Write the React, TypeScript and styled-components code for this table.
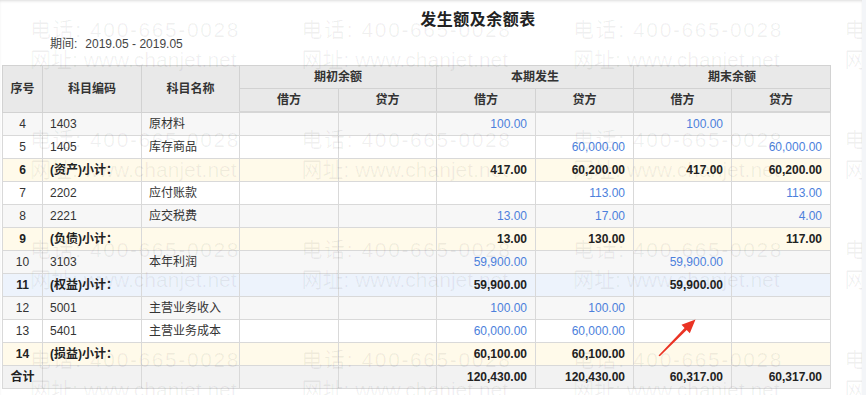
import React from "react";
import styled, { createGlobalStyle } from "styled-components";

const GlobalStyle = createGlobalStyle`
  html, body { margin: 0; padding: 0; }
  body {
    background: #f3f5f8;
    font-family: "Liberation Sans", "Noto Sans CJK SC", sans-serif;
    color: #333;
    overflow: hidden;
  }
`;

const Page = styled.div`
  display: flex;
  height: 395px;
`;

const Panel = styled.div`
  position: relative;
  width: 862px;
  height: 395px;
  background: #fff;
  box-shadow: inset 0 2px 3px -1px rgba(0, 0, 0, 0.14);
  overflow: hidden;
`;

const Title = styled.h1`
  margin: 0;
  padding: 10px 0 0 94px;
  height: 20px;
  line-height: 20px;
  text-align: center;
  font-size: 16px;
  font-weight: bold;
  color: #222;
  letter-spacing: 0.5px;
`;

const Period = styled.div`
  margin-top: 6px;
  padding-left: 50px;
  height: 16px;
  line-height: 16px;
  font-size: 12px;
  color: #444;
  display: flex;
  gap: 8px;
`;

const Table = styled.table`
  margin: 13px 0 0 2px;
  width: 828px;
  table-layout: fixed;
  border-collapse: collapse;
  font-size: 12px;
  border: 1px solid #cfcfcf;
`;

const Th = styled.th`
  height: 22px;
  padding: 0;
  line-height: 22px;
  background: #e9e9e9;
  border: 1px solid #d2d2d2;
  font-weight: bold;
  color: #333;
  text-align: center;
`;

const HeadLastRow = styled.tr`
  & > th { border-bottom: 2px solid #d6d6d6; }
`;

type Variant = "grey" | "white" | "sub" | "active" | "total";

const rowBg: Record<Variant, string> = {
  grey: "#f7f7f7",
  white: "#ffffff",
  sub: "#fffaea",
  active: "#edf3fc",
  total: "#f2f2f2",
};

const Tr = styled.tr<{ $v: Variant }>`
  background: ${(p) => rowBg[p.$v]};
`;

const Td = styled.td<{ $align?: "left" | "right" | "center"; $bold?: boolean; $blue?: boolean }>`
  height: 22px;
  padding: 0 ${(p) => (p.$align === "right" ? "8px" : "7px")};
  line-height: 22px;
  border: 1px solid #d9d9d9;
  text-align: ${(p) => p.$align || "left"};
  font-weight: ${(p) => (p.$bold ? "bold" : "normal")};
  color: ${(p) => (p.$blue ? "#4c7fdc" : p.$bold ? "#222" : "#333")};
  white-space: nowrap;
  overflow: visible;
`;

const Watermark = styled.div`
  position: absolute;
  left: 30px;
  top: 17px;
  display: grid;
  grid-template-columns: repeat(4, 271.5px);
  grid-auto-rows: 110px;
  pointer-events: none;
  z-index: 5;
`;

const MarkTile = styled.div`
  display: flex;
  flex-direction: column;
  gap: 5px;
  font-family: "Liberation Sans", "Noto Sans CJK SC", sans-serif;
  font-size: 21px;
  line-height: 25px;
  color: rgba(0, 0, 0, 0.06);
  white-space: nowrap;
`;

const MarkLine = styled.span<{ $spacing: number }>`
  letter-spacing: ${(p) => p.$spacing}px;
`;

const ArrowSvg = styled.svg`
  position: absolute;
  left: 0;
  top: 0;
  pointer-events: none;
  z-index: 6;
`;

type Row = {
  no: number;
  code: string;
  name?: string;
  v: string[];
  variant: Variant;
  sub?: boolean;
};

const rows: Row[] = [
  { no: 4, code: "1403", name: "原材料", v: ["", "", "100.00", "", "100.00", ""], variant: "grey" },
  { no: 5, code: "1405", name: "库存商品", v: ["", "", "", "60,000.00", "", "60,000.00"], variant: "white" },
  { no: 6, code: "(资产)小计：", v: ["", "", "417.00", "60,200.00", "417.00", "60,200.00"], variant: "sub", sub: true },
  { no: 7, code: "2202", name: "应付账款", v: ["", "", "", "113.00", "", "113.00"], variant: "white" },
  { no: 8, code: "2221", name: "应交税费", v: ["", "", "13.00", "17.00", "", "4.00"], variant: "grey" },
  { no: 9, code: "(负债)小计：", v: ["", "", "13.00", "130.00", "", "117.00"], variant: "sub", sub: true },
  { no: 10, code: "3103", name: "本年利润", v: ["", "", "59,900.00", "", "59,900.00", ""], variant: "grey" },
  { no: 11, code: "(权益)小计：", v: ["", "", "59,900.00", "", "59,900.00", ""], variant: "active", sub: true },
  { no: 12, code: "5001", name: "主营业务收入", v: ["", "", "100.00", "100.00", "", ""], variant: "grey" },
  { no: 13, code: "5401", name: "主营业务成本", v: ["", "", "60,000.00", "60,000.00", "", ""], variant: "white" },
  { no: 14, code: "(损益)小计：", v: ["", "", "60,100.00", "60,100.00", "", ""], variant: "sub", sub: true },
];

const totals = ["", "", "120,430.00", "120,430.00", "60,317.00", "60,317.00"];
const colWidths = [40, 99, 98, 99, 98, 99, 98, 98, 99];

export default function App() {
  return (
    <>
      <GlobalStyle />
      <Page>
        <Panel>
          <Title>发生额及余额表</Title>
          <Period>
            <span>期间:</span>
            <span>2019.05 - 2019.05</span>
          </Period>
          <Table>
            <colgroup>
              {colWidths.map((w, i) => (
                <col key={i} style={{ width: w }} />
              ))}
            </colgroup>
            <thead>
              <tr>
                <Th rowSpan={2}>序号</Th>
                <Th rowSpan={2}>科目编码</Th>
                <Th rowSpan={2}>科目名称</Th>
                <Th colSpan={2}>期初余额</Th>
                <Th colSpan={2}>本期发生</Th>
                <Th colSpan={2}>期末余额</Th>
              </tr>
              <HeadLastRow>
                <Th>借方</Th>
                <Th>贷方</Th>
                <Th>借方</Th>
                <Th>贷方</Th>
                <Th>借方</Th>
                <Th>贷方</Th>
              </HeadLastRow>
            </thead>
            <tbody>
              {rows.map((r) => (
                <Tr key={r.no} $v={r.variant}>
                  <Td $align="center" $bold={r.sub}>{r.no}</Td>
                  <Td $bold={r.sub}>{r.code}</Td>
                  <Td>{r.name || ""}</Td>
                  {r.v.map((x, i) => (
                    <Td key={i} $align="right" $bold={r.sub} $blue={!r.sub && x !== ""}>
                      {x}
                    </Td>
                  ))}
                </Tr>
              ))}
              <Tr $v="total">
                <Td $align="center" $bold>合计</Td>
                <Td />
                <Td />
                {totals.map((x, i) => (
                  <Td key={i} $align="right" $bold>
                    {x}
                  </Td>
                ))}
              </Tr>
            </tbody>
          </Table>
          <Watermark>
            {Array.from({ length: 16 }).map((_, i) => (
              <MarkTile key={i}>
                <MarkLine $spacing={1.6}>电话: 400-665-0028</MarkLine>
                <MarkLine $spacing={0}>网址: www.chanjet.net</MarkLine>
              </MarkTile>
            ))}
          </Watermark>
          <ArrowSvg width="862" height="395" viewBox="0 0 862 395">
            <polygon
              points="658.5,355.5 659.8,356.2 686.7,330.1 689.8,333.3 695.5,319.5 681.5,324.7 684.6,327.9"
              fill="#ea3324"
            />
          </ArrowSvg>
        </Panel>
      </Page>
    </>
  );
}
